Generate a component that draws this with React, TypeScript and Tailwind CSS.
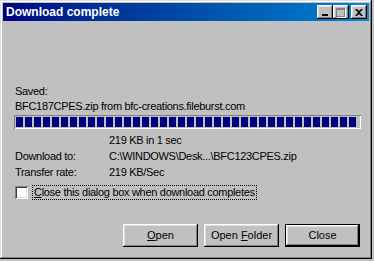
const font = "font-['Liberation_Sans',Arial,sans-serif]";

const raised =
  "shadow-[inset_-1px_-1px_#000000,inset_1px_1px_#ffffff,inset_-2px_-2px_#808080,inset_2px_2px_#dfdfdf]";

const TitleButton = ({ children }: { children: React.ReactNode }) => (
  <div className={`w-[16px] h-[14px] bg-[#c0c0c0] flex items-center justify-center ${raised}`}>
    {children}
  </div>
);

const Button = ({ children, isDefault }: { children: React.ReactNode; isDefault?: boolean }) => (
  <div
    className={`w-[75px] h-[23px] bg-[#c0c0c0] flex items-center justify-center text-[11px] text-black ${
      isDefault ? "border border-black " : ""
    }${raised}`}
  >
    {children}
  </div>
);

export default function App() {
  const blocks = Array.from({ length: 38 });

  return (
    <div className={`w-[374px] h-[261px] bg-[#c0c0c0] overflow-hidden ${font}`}>
      <div className="w-[372px] h-[259px] bg-[#c0c0c0] p-[3px] shadow-[inset_-1px_-1px_#000000,inset_1px_1px_#dfdfdf,inset_-2px_-2px_#808080,inset_2px_2px_#ffffff]">
        {/* title bar */}
        <div className="h-[18px] bg-gradient-to-r from-[#000080] to-[#1084d0] flex items-center pl-[3px] pr-[2px]">
          <span className="text-white font-bold text-[12px] leading-none">Download complete</span>
          <div className="ml-auto flex items-center">
            <TitleButton>
              <div className="w-[6px] h-[2px] bg-black mt-[6px] ml-[-1px]" />
            </TitleButton>
            <TitleButton>
              <div className="w-[9px] h-[9px] border border-[#808080] border-t-2 shadow-[1px_1px_#ffffff] ml-[-1px]" />
            </TitleButton>
            <div className="w-[2px]" />
            <TitleButton>
              <svg width="8" height="7" viewBox="0 0 8 7" className="ml-[-1px]">
                <path d="M0 0h2l2 2 2-2h2L5 3.5 8 7H6L4 5 2 7H0l3-3.5z" fill="#000" />
              </svg>
            </TitleButton>
          </div>
        </div>

        {/* body */}
        <div className="pl-[11px] text-[11px] text-black tracking-[-0.3px]">
          <div className="mt-[63px] leading-[15px] pl-[1px]">Saved:</div>
          <div className="leading-[15px] pl-[1px]">BFC187CPES.zip from bfc-creations.fileburst.com</div>

          <div className="mt-[1px] w-[347px] h-[14px] p-[2px] shadow-[inset_1px_1px_#808080,inset_-1px_-1px_#ffffff] flex gap-[2px]">
            {blocks.map((_, i) => (
              <div key={i} className="w-[7px] h-full bg-[#000080]" />
            ))}
          </div>

          <div className="mt-[3px] grid grid-cols-[94px_1fr] leading-[16px] pl-[1px]">
            <div />
            <div>219 KB in 1 sec</div>
            <div>Download to:</div>
            <div>C:\WINDOWS\Desk...\BFC123CPES.zip</div>
            <div>Transfer rate:</div>
            <div>219 KB/Sec</div>
          </div>

          <div className="mt-[5px] flex items-center h-[15px]">
            <div className="ml-[1px] w-[13px] h-[13px] bg-white shadow-[inset_1px_1px_#808080,inset_-1px_-1px_#ffffff,inset_2px_2px_#404040,inset_-2px_-2px_#dfdfdf]" />
            <div className="ml-[4px] h-[15px] px-[1px] border border-dotted border-black flex items-center leading-none">
              <span>
                <span className="underline">C</span>lose this dialog box when download completes
              </span>
            </div>
          </div>

          <div className="mt-[24px] flex gap-[6px] pl-[109px] tracking-normal">
            <Button>
              <span>
                <span className="underline">O</span>pen
              </span>
            </Button>
            <Button>
              <span>
                Open <span className="underline">F</span>older
              </span>
            </Button>
            <Button isDefault>Close</Button>
          </div>
        </div>
      </div>
    </div>
  );
}
